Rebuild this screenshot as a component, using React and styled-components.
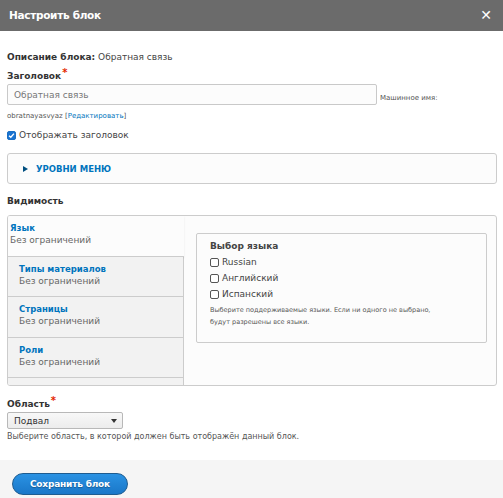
import React from 'react';
import styled, { createGlobalStyle } from 'styled-components';

const Global = createGlobalStyle`
  html, body { margin: 0; padding: 0; background: #fff; }
  body { font-family: "DejaVu Sans", Verdana, sans-serif; color: #333; }
  * { box-sizing: border-box; }
`;

const Dialog = styled.div`
  width: 503px;
  height: 498px;
  display: flex;
  flex-direction: column;
  overflow: hidden;
  background: #fff;
`;

const TitleBar = styled.div`
  height: 31px;
  flex: none;
  background: #6b6b6b;
  display: flex;
  align-items: center;
  justify-content: space-between;
  padding: 0 9px 2px 9px;
  color: #fff;
`;

const Title = styled.h1`
  margin: 0;
  font-size: 10.5px;
  font-weight: bold;
  letter-spacing: -0.3px;
`;

const Close = styled.span`
  font-size: 14px;
  font-weight: bold;
  line-height: 1;
  margin-right: 2px;
`;

const Body = styled.div`
  flex: 1;
  padding: 18px 6px 0 7px;
  display: flex;
  flex-direction: column;
`;

const Desc = styled.div`
  font-size: 9px;
  color: #444;
  height: 14px;
  line-height: 14px;
  margin-top: 1px;
  b { color: #333; }
`;

const Label = styled.div`
  font-size: 9px;
  font-weight: bold;
  color: #333;
  margin-top: ${p => p.mt || 0}px;
  line-height: 14px;
  span { color: #e32700; font-size: 10px; position: relative; top: -3px; margin-left: 1px; }
`;

const InputRow = styled.div`
  display: flex;
  align-items: center;
  margin-top: 1px;
`;

const Input = styled.div`
  width: 370px;
  height: 21px;
  border: 1px solid #c9c9c9;
  border-radius: 2px;
  background: #fcfcfc;
  padding: 0 6px;
  display: flex;
  align-items: center;
  font-size: 9px;
  color: #777;
`;

const Small = styled.span`
  font-size: 7px;
  color: #555;
  margin-left: ${p => p.ml || 0}px;
  margin-top: ${p => p.mt || 0}px;
`;

const MachineRow = styled.div`
  margin-top: 5px;
  height: 12px;
  line-height: 12px;
  font-size: 7px;
  color: #555;
  a { color: #0074bd; text-decoration: none; }
`;

const CheckRow = styled.label`
  display: flex;
  align-items: center;
  gap: 3px;
  font-size: ${p => p.fs || 9}px;
  color: #444;
  height: ${p => p.h || 16}px;
  margin-top: ${p => p.mt || 0}px;
`;

const Box = styled.span`
  width: 9px;
  height: 9px;
  border-radius: 2px;
  border: 1px solid ${p => (p.checked ? '#1a6fc4' : '#555')};
  background: ${p => (p.checked ? '#1a73d0' : '#fff')};
  display: inline-flex;
  align-items: center;
  justify-content: center;
  flex: none;
`;

const Details = styled.div`
  margin-top: 8px;
  height: 31px;
  border: 1px solid #ccc;
  border-radius: 3px;
  background: #fcfcfc;
  display: flex;
  align-items: center;
  padding-left: 15px;
  gap: 8px;
  font-size: 8.5px;
  font-weight: bold;
  color: #0074bd;
`;

const Tri = styled.span`
  width: 0;
  height: 0;
  border-top: 3px solid transparent;
  border-bottom: 3px solid transparent;
  border-left: 5px solid #004f80;
`;

const Tabs = styled.div`
  margin-top: 7px;
  height: 171px;
  border: 1px solid #ccc;
  border-radius: 3px;
  display: flex;
  background: #fcfcfc;
  overflow: hidden;
`;

const TabList = styled.div`
  width: 176px;
  flex: none;
  background: #f2f2f2;
  border-right: 1px solid #ccc;
  display: flex;
  flex-direction: column;
`;

const Tab = styled.div`
  height: ${p => p.h}px;
  padding: 6px 0 0 ${p => (p.active ? 2 : 11)}px;
  background: ${p => (p.active ? '#fcfcfc' : '#f2f2f2')};
  border-bottom: 1px solid #ccc;
  margin-right: ${p => (p.active ? -1 : 0)}px;
  box-shadow: ${p => (p.active ? '0 1px 2px rgba(0,0,0,0.08)' : 'none')};
  position: relative;
`;

const TabTitle = styled.div`
  font-size: 8.5px;
  font-weight: bold;
  color: #0074bd;
  line-height: 12px;
`;

const TabSub = styled.div`
  font-size: 9px;
  color: #666;
  line-height: 13px;
`;

const Pane = styled.div`
  flex: 1;
  padding: 17px 9px 0 12px;
`;

const Fieldset = styled.div`
  height: 110px;
  border: 1px solid #ccc;
  border-radius: 2px;
  background: #fcfcfc;
  padding: 5px 13px 0 13px;
`;

const Legend = styled.div`
  font-size: 9px;
  font-weight: bold;
  color: #444;
  height: 14px;
  line-height: 14px;
  margin-bottom: 1px;
`;

const Help = styled.div`
  font-size: ${p => p.fs || 6.5}px;
  color: #555;
  line-height: 12px;
  margin-top: ${p => p.mt || 0}px;
`;

const Select = styled.div`
  margin-top: 1px;
  width: 116px;
  height: 17px;
  border: 1px solid #b8b8b8;
  border-radius: 2px;
  background: linear-gradient(#f8f8f8, #ececec);
  display: flex;
  align-items: center;
  justify-content: space-between;
  padding: 0 5px 0 6px;
  font-size: 9px;
  color: #333;
`;

const Arrow = styled.span`
  width: 0;
  height: 0;
  border-left: 3px solid transparent;
  border-right: 3px solid transparent;
  border-top: 4px solid #333;
`;

const Footer = styled.div`
  height: 38px;
  flex: none;
  background: #f5f5f5;
  padding: 12px 0 0 12px;
`;

const SaveButton = styled.button`
  width: 116px;
  height: 22px;
  border-radius: 12px;
  border: 1px solid #1e5c90;
  background: linear-gradient(#2a92e3, #1a77c8);
  color: #fff;
  font-family: "DejaVu Sans", Verdana, sans-serif;
  font-size: 9px;
  font-weight: bold;
  letter-spacing: -0.2px;
  text-shadow: 0 1px 1px rgba(0,0,0,0.3);
  padding: 0;
`;

const Check = () => (
  <svg width="7" height="7" viewBox="0 0 8 8">
    <path d="M1.2 4.2 L3.2 6 L6.8 1.8" stroke="#fff" strokeWidth="1.5" fill="none" />
  </svg>
);

const tabs = [
  { title: 'Язык', h: 41, active: true },
  { title: 'Типы материалов', h: 40 },
  { title: 'Страницы', h: 41 },
  { title: 'Роли', h: 40 },
];

export default function App() {
  return (
    <Dialog>
      <Global />
      <TitleBar>
        <Title>Настроить блок</Title>
        <Close>✕</Close>
      </TitleBar>
      <Body>
        <Desc><b>Описание блока:</b> Обратная связь</Desc>
        <Label mt={5}>Заголовок<span>*</span></Label>
        <InputRow>
          <Input>Обратная связь</Input>
          <Small ml={3} mt={7}>Машинное имя:</Small>
        </InputRow>
        <MachineRow>obratnayasvyaz [<a href="#">Редактировать</a>]</MachineRow>
        <CheckRow h={20} mt={3}>
          <Box checked><Check /></Box>
          Отображать заголовок
        </CheckRow>
        <Details>
          <Tri />
          УРОВНИ МЕНЮ
        </Details>
        <Label mt={10}>Видимость</Label>
        <Tabs>
          <TabList>
            {tabs.map(t => (
              <Tab key={t.title} h={t.h} active={t.active}>
                <TabTitle>{t.title}</TabTitle>
                <TabSub>Без ограничений</TabSub>
              </Tab>
            ))}
          </TabList>
          <Pane>
            <Fieldset>
              <Legend>Выбор языка</Legend>
              {['Russian', 'Английский', 'Испанский'].map(l => (
                <CheckRow key={l} fs={9}>
                  <Box />
                  {l}
                </CheckRow>
              ))}
              <Help mt={2}>
                Выберите поддерживаемые языки. Если ни одного не выбрано,<br />
                будут разрешены все языки.
              </Help>
            </Fieldset>
          </Pane>
        </Tabs>
        <Label mt={11}>Область<span>*</span></Label>
        <Select>Подвал<Arrow /></Select>
        <Help mt={2} fs={8}>Выберите область, в которой должен быть отображён данный блок.</Help>
      </Body>
      <Footer>
        <SaveButton>Сохранить блок</SaveButton>
      </Footer>
    </Dialog>
  );
}
